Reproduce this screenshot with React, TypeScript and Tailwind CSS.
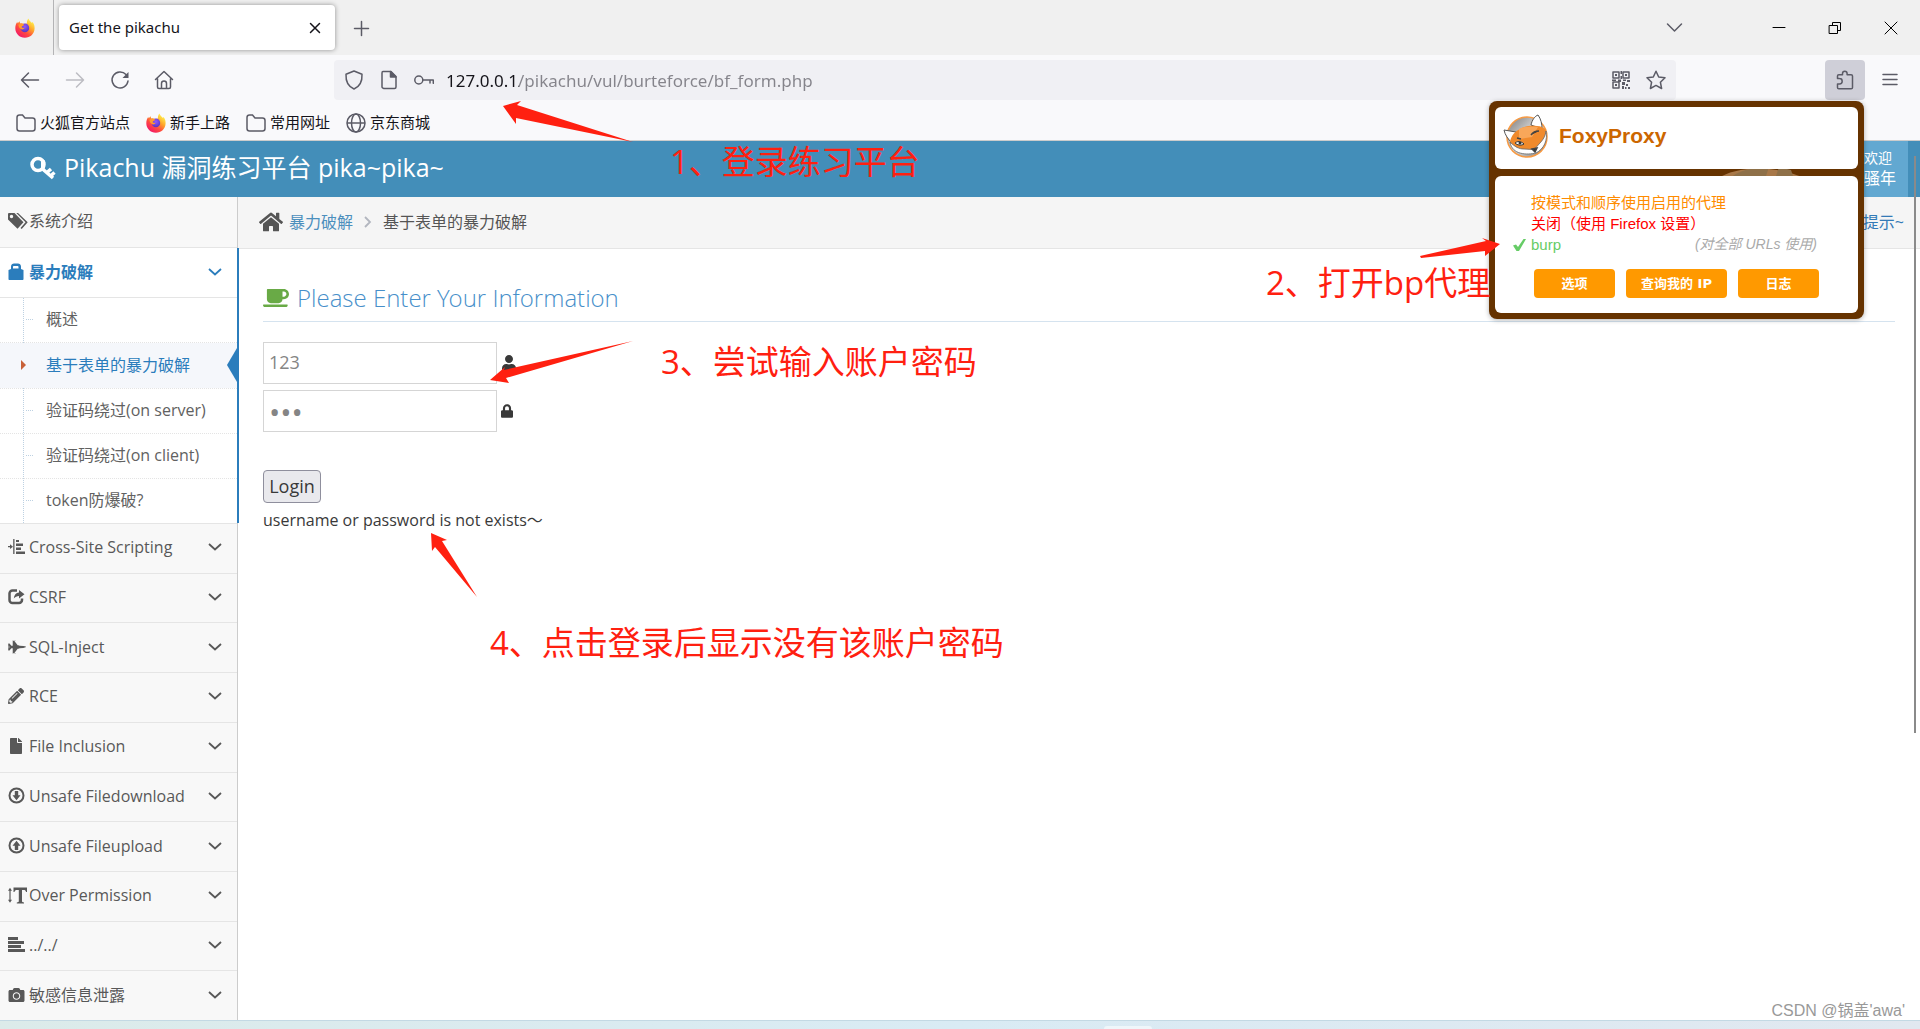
import type { ReactNode } from "react";
import {
  FaCamera,
  FaCoffee,
  FaFighterJet,
  FaFile,
  FaHome,
  FaLock,
  FaPencilAlt,
  FaUser,
} from "react-icons/fa";

type IconProps = { className?: string };

function FirefoxIcon({ className }: IconProps) {
  return (
    <svg viewBox="0 0 20 20" className={className} aria-hidden="true">
      <defs>
        <linearGradient id="ffBody" x1="0.85" y1="0.1" x2="0.2" y2="0.95">
          <stop offset="0" stopColor="#fff44f" />
          <stop offset="0.35" stopColor="#ffa52a" />
          <stop offset="0.65" stopColor="#ff4a3f" />
          <stop offset="1" stopColor="#f2156b" />
        </linearGradient>
        <radialGradient id="ffGlobe" cx="0.5" cy="0.35" r="0.6">
          <stop offset="0" stopColor="#9059ff" />
          <stop offset="1" stopColor="#5b37c4" />
        </radialGradient>
      </defs>
      <path
        fill="url(#ffBody)"
        d="M13.4 0.4c.6 2 2 2.900 3.200 4.300c.5-.1.900-.3 1-.8c1.500 1.900 2.100 4.200 2 6.600c-.2 5.300-4.400 9.300-9.700 9.300C4.500 19.800.3 15.600.3 10.300c0-2.500.7-4.800 2-6.600c0 .6.1 1.100.4 1.600c.6-.8 1.300-1.500 2.100-2c-.1.900.1 1.600.5 2.200c1.300-.3 2.600-.1 3.700.6c1-.6 2-.8 3-.7c-.3-1.800.1-3.500 1.400-5z"
      />
      <circle cx="9.900" cy="9.900" r="4.300" fill="url(#ffGlobe)" />
      <path fill="#ff9a2e" d="M3.500 6.800c1.700-1.300 4-1.400 5.600-.3c-.2 1.200-1.500 1.300-2.200 2c-.7.800.4 1.700 2.700 1.300c-.6 1.800-2.200 1.900-3.300 1.500c-1.700-.6-2.800-2.500-2.800-4.500z" />
    </svg>
  );
}

function FoxyLogo({ className }: IconProps) {
  return (
    <svg viewBox="0 0 46 44" className={className} aria-hidden="true">
      <defs>
        <linearGradient id="disc" x1="0" y1="0" x2="1" y2="1">
          <stop offset="0" stopColor="#777" />
          <stop offset="0.5" stopColor="#ddd" />
          <stop offset="1" stopColor="#777" />
        </linearGradient>
      </defs>
      <circle cx="24" cy="23" r="20" fill="url(#disc)" stroke="#f79a43" strokeWidth="1.500" />
      <path d="M1 16l12 2-4 11c-4-4-7-8-8-13z" fill="#fff" stroke="#555" />
      <path d="M28 11C29 6 32 2 35 1c3 4 4 9 4 14z" fill="#fff" stroke="#555" />
      <path d="M7 28c1-6 5-11 10-13c5-3 11-4 17-3c4 0 7 2 9 4c1 9-2 16-11 21c-4 2-7 1-9 0c-7-2-13-3-16-9z" fill="#f08a2c" />
      <path d="M16 15c6-3 13-3 19-2l-6 10-13 2z" fill="#f8a75a" />
      <path d="M7 28c5 5 9 7 14 7c4 0 8 1 11 0c4-6 10-9 11-18c2 9-2 18-10 22c-9 2-24 2-26-11z" fill="#fff" stroke="#666" strokeWidth="0.800" />
      <path d="M12 29c2-2 6-2 9 1c-3 2-7 1-9-1z" fill="#fff" stroke="#333" />
      <circle cx="17" cy="29" r="1.500" fill="#333" />
      <path d="M28 21c2-3 5-4 8-4M14 24l4 1M29 35l5-1-2 4z" stroke="#444" strokeWidth="1.500" fill="#333" />
    </svg>
  );
}

function TagsIcon() {
  return (
    <svg viewBox="0 0 20 16" className="h-4 w-5 shrink-0" fill="currentColor" aria-hidden="true">
      <path fillRule="evenodd" d="M0 1a1 1 0 0 1 1-1h5.500l9 9.200-6 6.600L0 6.500zM3.500 1.800a1.700 1.700 0 1 0 0 3.400a1.700 1.700 0 0 0 0-3.400z" />
      <path d="M8.300 0h1.700l9.700 9.200-6 6.800-1.200-1 5-5.800z" />
    </svg>
  );
}

function BagIcon() {
  return (
    <svg viewBox="0 0 16 17" className="h-[17px] w-4 shrink-0" fill="currentColor" aria-hidden="true">
      <path fillRule="evenodd" d="M3 6V3.500C3 1.500 4.500.5 6 .5h4c1.500 0 3 1 3 3V6l2.500 1v9c0 .6-.4 1-1 1h-13c-.6 0-1-.4-1-1V7zM6 3c-.6 0-1 .4-1 1v1.500h5.500V4c0-.6-.4-1-1-1z" />
    </svg>
  );
}

function IndentIcon() {
  return (
    <svg viewBox="0 0 17 16" className="h-4 w-[17px] shrink-0" fill="currentColor" aria-hidden="true">
      <path d="M5.200 0h1.300v15H5.200zM8 1h3v2H8zM8 4.500h7v2.500H8zM8 8.500h5V11H8zM8 12.500h9V15H8zM0 7h2V5.200L5 7.700 2 10V8.300H0z" />
    </svg>
  );
}

function ShareIcon() {
  return (
    <svg viewBox="0 0 17 16" className="h-4 w-[17px] shrink-0" aria-hidden="true">
      <path d="M9 1.500H4.500a3 3 0 0 0-3 3v6.500a3 3 0 0 0 3 3H11a3 3 0 0 0 3-3V9.500" fill="none" stroke="currentColor" strokeWidth="2.500" />
      <path d="M11 1l5.500 4.200L11 9.500V7C9 7 7 8 5.800 9.500C6 6 8 3.800 11 3.500z" fill="currentColor" />
    </svg>
  );
}

function CircleArrowIcon({ up }: { up?: boolean }) {
  return (
    <svg viewBox="0 0 17 17" className="h-[17px] w-[17px] shrink-0" aria-hidden="true">
      <circle cx="8.500" cy="8.500" r="7" fill="none" stroke="currentColor" strokeWidth="2" />
      {up ? (
        <path d="M8.500 3.800L12.500 8.800H10.200V13H6.800V8.800H4.500z" fill="currentColor" />
      ) : (
        <path d="M8.500 13.200L4.500 8.200H6.800V4h3.400v4.200h2.300z" fill="currentColor" />
      )}
    </svg>
  );
}

function TextHeightIcon() {
  return (
    <svg viewBox="0 0 19 17" className="h-[17px] w-[19px] shrink-0" fill="currentColor" aria-hidden="true">
      <path d="M5.500 0.500H19V5H18c-.2-1.400-1-2-2.200-2H14v11c0 1 .5 1.300 2 1.500v1H8.800v-1c1.400-.2 2-.5 2-1.500V3H9C7.500 3 6.800 3.600 6.500 5h-1zM2 .8l2 3H2.600v9H4l-2 3-2-3h1.400v-9H0z" />
    </svg>
  );
}

function AlignLeftIcon() {
  return (
    <svg viewBox="0 0 17 16" className="h-4 w-[17px] shrink-0" fill="currentColor" aria-hidden="true">
      <path d="M0 0h10v3H0zM0 4h16v3H0zM0 8h13v3H0zM0 12h17v3H0z" />
    </svg>
  );
}

function AngleDown() {
  return (
    <svg viewBox="0 0 14 8" className="h-2 w-[14px]" fill="none" stroke="currentColor" strokeWidth="1.800" aria-hidden="true">
      <path d="M1 1l6 5.500L13 1" />
    </svg>
  );
}

type ChromeButtonProps = { label: string; className?: string; children: ReactNode };

function ChromeButton({ label, className = "", children }: ChromeButtonProps) {
  return (
    <button type="button" aria-label={label} className={`flex h-10 w-10 shrink-0 items-center justify-center rounded ${className}`}>
      <svg viewBox="0 0 20 20" className="h-5 w-5" fill="none" stroke="currentColor" strokeWidth="1.500" strokeLinejoin="round" strokeLinecap="round">
        {children}
      </svg>
    </button>
  );
}

function TabBar() {
  return (
    <div className="flex h-[55px] shrink-0 items-center bg-[#f0f0f0] font-['Noto_Sans','Noto_Sans_CJK_SC',sans-serif]">
      <div className="flex h-full w-[54px] items-center border-r border-[#b4b4b6] pl-[15px]">
        <FirefoxIcon className="h-5 w-5" />
      </div>
      <div className="ml-[5px] flex h-[45px] w-[276px] items-center justify-between rounded bg-white pl-[10px] shadow-[0_0_5px_rgba(0,0,0,0.4)]">
        <span className="text-[15px] text-[#15141a]">Get the pikachu</span>
        <ChromeButton label="Close tab" className="text-[#15141a]">
          <path d="M5.500 5.500l9 9M14.500 5.500l-9 9" />
        </ChromeButton>
      </div>
      <ChromeButton label="New tab" className="ml-[6px] text-[#5b5b66]">
        <path d="M10.500 3.500v14M3.500 10.500h14" />
      </ChromeButton>
      <div className="ml-auto flex items-center text-black">
        <ChromeButton label="List all tabs" className="mr-[65px] text-[#5b5b66]">
          <path d="M3.500 6l7 7 7-7" />
        </ChromeButton>
        <ChromeButton label="Minimize" className="mr-4">
          <path d="M4 9.500h12" strokeWidth="1" />
        </ChromeButton>
        <ChromeButton label="Restore" className="mr-4">
          <path d="M4.500 7.500h8v8h-8zM7.500 7V4.500h8v8H13" strokeWidth="1" />
        </ChromeButton>
        <ChromeButton label="Close window" className="mr-[9px]">
          <path d="M4 4l12 12M16 4L4 16" strokeWidth="1" />
        </ChromeButton>
      </div>
    </div>
  );
}

function NavBar() {
  return (
    <div className="flex h-[50px] shrink-0 items-center bg-[#f9f9fb] text-[#5b5b66]">
      <ChromeButton label="Back" className="ml-[10px]">
        <path d="M1.500 10h17M8.500 3l-7 7 7 7" />
      </ChromeButton>
      <ChromeButton label="Forward" className="ml-[5px] text-[#bcbcc2]">
        <path d="M1.500 10h17M11.500 3l7 7-7 7" />
      </ChromeButton>
      <ChromeButton label="Reload" className="ml-[5px]">
        <path d="M18 11a8 8 0 1 1-2-6.500" />
        <path d="M18.500 2v6h-6z" fill="currentColor" stroke="none" />
      </ChromeButton>
      <ChromeButton label="Home" className="ml-1">
        <path d="M1.500 9.500L10 1.500l8.500 8M3.500 8.500V17c0 .8.700 1.500 1.500 1.500h10c.8 0 1.500-.7 1.500-1.500V8.500M7.500 18.500V13.500c0-1.500 1-2.500 2.500-2.500s2.500 1 2.500 2.500v5" />
      </ChromeButton>
      <div className="ml-[150px] flex h-10 flex-1 items-center rounded bg-[#f0f0f4] font-['Noto_Sans',sans-serif]">
        <ChromeButton label="Tracking protection">
          <path d="M10 1L18 4.300c.3 6-1.500 12-8 14.700C3.500 16.300 1.700 10.300 2 4.300z" />
        </ChromeButton>
        <ChromeButton label="Site information" className="-ml-[5px]">
          <path d="M4 1.500h8l5 5V17c0 .8-.7 1.500-1.500 1.500h-10C4.700 18.500 3 17.800 3 17V3c0-.8.500-1.500 1-1.500z" />
          <path d="M11.500 1.500v5.500H17z" fill="currentColor" />
        </ChromeButton>
        <ChromeButton label="Saved password" className="-ml-[5px]">
          <circle cx="4.800" cy="10" r="4" />
          <path d="M9 10h10.300v3.300M16 10v3" />
        </ChromeButton>
        <input
          type="text"
          aria-label="Address"
          defaultValue="127.0.0.1/pikachu/vul/burteforce/bf_form.php"
          className="ml-[2px] h-10 min-w-0 flex-1 bg-[linear-gradient(to_right,#15141a_73px,#85848b_73px)] bg-clip-text text-[17px] text-transparent outline-none"
        />
        <ChromeButton label="QR code">
          <path d="M2 2h6v6H2zM12 2h6v6h-6zM2 12h6v6H2z" />
          <path
            d="M4 4h2v2H4zM14 4h2v2h-2zM4 14h2v2H4zM9.500 1h1.500v3H9.500zM9.500 6h1.500v3H9.500zM1 9.500h4V11H1zM7 9.500h3V12H7zM12 9.500h3V11h-3zM16 10h3v2h-3zM11 12h3v3h-3zM15 14h2v2h-2zM11 16h2v3h-2zM17 17h2v2h-2zM14 17h1.500v2H14z"
            fill="currentColor"
            stroke="none"
          />
        </ChromeButton>
        <ChromeButton label="Bookmark this page" className="-ml-[5px]">
          <path d="M10 1.200l2.700 5.800 6.300.8-4.600 4.400 1.200 6.300L10 15.400l-5.600 3.100 1.200-6.300L1 7.800 7.300 7z" />
        </ChromeButton>
      </div>
      <ChromeButton label="Extensions" className="ml-[149px] bg-[#cfcfd8]">
        <path d="M2.500 8.500V6c0-.8.500-1.300 1.300-1.300H7.500V3.500a2.300 2.300 0 0 1 4.600 0v1.200h4c.8 0 1.400.5 1.400 1.300v11.500c0 .8-.6 1.300-1.400 1.300H3.800c-.8 0-1.300-.5-1.300-1.300V14h2a2.700 2.700 0 0 0 0-5.400z" />
      </ChromeButton>
      <ChromeButton label="Open application menu" className="ml-[5px] mr-[10px]">
        <path d="M3 4.500h14M3 9.500h14M3 14.500h14" />
      </ChromeButton>
    </div>
  );
}

function FolderIcon() {
  return (
    <svg viewBox="0 0 20 18" className="h-[18px] w-5" fill="none" stroke="#5b5b66" strokeWidth="1.500" aria-hidden="true">
      <path d="M1 3.500C1 2 2 1 3.500 1h3l2.500 3h7.500C18 4 19 5 19 6.500v8c0 1.500-1 2.500-2.500 2.500h-13C2 17 1 16 1 14.500z" />
    </svg>
  );
}

function GlobeIcon() {
  return (
    <svg viewBox="0 0 20 20" className="h-5 w-5" fill="none" stroke="#5b5b66" strokeWidth="1.500" aria-hidden="true">
      <circle cx="10" cy="10" r="9" />
      <ellipse cx="10" cy="10" rx="4.500" ry="9" />
      <path d="M1 10h18" />
    </svg>
  );
}

const bookmarks: { label: string; icon: ReactNode }[] = [
  { label: "火狐官方站点", icon: <FolderIcon /> },
  { label: "新手上路", icon: <FirefoxIcon className="h-5 w-5" /> },
  { label: "常用网址", icon: <FolderIcon /> },
  { label: "京东商城", icon: <GlobeIcon /> },
];

function BookmarksBar() {
  return (
    <nav className="flex h-9 shrink-0 items-center gap-4 border-b border-[#cccccc] bg-[#f9f9fb] pl-4">
      {bookmarks.map((item) => (
        <a key={item.label} href="#" className="flex items-center gap-1 text-[15px] text-[#15141a]">
          {item.icon}
          {item.label}
        </a>
      ))}
    </nav>
  );
}

function SiteHeader() {
  return (
    <header className="flex h-14 shrink-0 items-center bg-[#438eb9] pr-3 text-white">
      <a href="#" className="ml-[30px] flex items-center gap-2 pb-[2px] text-[26px]">
        <svg viewBox="0 0 26 24" className="h-6 w-[26px]" aria-hidden="true">
          <circle cx="8" cy="8.500" r="6" fill="none" stroke="currentColor" strokeWidth="3.500" />
          <path d="M12 12.500l11 9.500M17.500 16l3.500-3M21 19.500l3.500-3" fill="none" stroke="currentColor" strokeWidth="3.500" />
          <path d="M11 3l4 1.500v8L11 13" fill="currentColor" />
        </svg>
        <span className="text-[25px]">Pikachu 漏洞练习平台 pika~pika~</span>
      </a>
      <button type="button" className="ml-auto flex h-full w-24 flex-col justify-center bg-[#62a8d1] pb-[2px] pl-[52px] text-left">
        <span className="text-sm leading-5">欢迎</span>
        <span className="text-base leading-5">骚年</span>
      </button>
    </header>
  );
}

const subItems = ["概述", "基于表单的暴力破解", "验证码绕过(on server)", "验证码绕过(on client)", "token防爆破?"];

const menuItems: { label: string; icon: ReactNode }[] = [
  { label: "Cross-Site Scripting", icon: <IndentIcon /> },
  { label: "CSRF", icon: <ShareIcon /> },
  { label: "SQL-Inject", icon: <FaFighterJet className="h-4 w-[18px]" /> },
  { label: "RCE", icon: <FaPencilAlt className="h-4 w-4" /> },
  { label: "File Inclusion", icon: <FaFile className="h-4 w-4" /> },
  { label: "Unsafe Filedownload", icon: <CircleArrowIcon /> },
  { label: "Unsafe Fileupload", icon: <CircleArrowIcon up /> },
  { label: "Over Permission", icon: <TextHeightIcon /> },
  { label: "../../", icon: <AlignLeftIcon /> },
  { label: "敏感信息泄露", icon: <FaCamera className="h-4 w-[17px]" /> },
];

function Sidebar() {
  return (
    <aside className="flex w-[238px] shrink-0 flex-col border-r border-[#cccccc] bg-[#f8f8f8] text-base text-[#585858]">
      <a href="#" className="flex h-[51px] shrink-0 items-center border-b border-[#e5e5e5] pb-[2px] pl-2">
        <span className="flex w-[21px] items-center">
          <TagsIcon />
        </span>
        系统介绍
      </a>
      <div className="relative shrink-0 bg-white">
        <div className="absolute top-0 -right-[2px] bottom-0 w-[2px] bg-[#2b7dbc]" />
        <button type="button" className="flex h-[50px] w-full items-center border-b border-[#e5e5e5] pr-[15px] pb-[2px] pl-2 font-bold text-[#2b7dbc]">
          <span className="flex w-[21px] items-center">
            <BagIcon />
          </span>
          <span className="flex-1 text-left">暴力破解</span>
          <AngleDown />
        </button>
        <ul className="relative">
          <li aria-hidden="true" className="absolute top-0 bottom-0 left-[23px] border-l border-dotted border-[#bdd1e2]" />
          {subItems.map((label, i) => (
            <li key={label} className={i ? "border-t border-dotted border-[#e4e4e4]" : ""}>
              <a
                href="#"
                className={
                  i === 1
                    ? "relative flex h-[45px] items-center bg-[#f5f7fb] pb-[2px] pl-[46px] text-[#2b7dbc]"
                    : "relative flex h-[44px] items-center pb-[2px] pl-[46px] text-[#616161]"
                }
              >
                {i === 1 ? (
                  <>
                    <svg viewBox="0 0 6 10" className="absolute left-[20px] h-[10px] w-[6px] bg-[#f5f7fb]" aria-hidden="true">
                      <path d="M1 0l5 5-5 5z" fill="#c86139" />
                    </svg>
                    <svg viewBox="0 0 10 34" className="absolute right-0 h-[34px] w-[10px]" aria-hidden="true">
                      <path d="M10 0v34L0 17z" fill="#2b7dbc" />
                    </svg>
                  </>
                ) : (
                  <span className="absolute left-[26px] w-[7px] border-t border-dotted border-[#bdd1e2]" />
                )}
                {label}
              </a>
            </li>
          ))}
        </ul>
      </div>
      <div className="flex min-h-0 flex-1 flex-col">
        {menuItems.map((item) => (
          <button key={item.label} type="button" className="flex flex-1 items-center border-t border-[#e5e5e5] pr-[15px] pb-[2px] pl-2">
            <span className="flex w-[21px] items-center">{item.icon}</span>
            <span className="flex-1 text-left">{item.label}</span>
            <AngleDown />
          </button>
        ))}
      </div>
    </aside>
  );
}

function Breadcrumb() {
  return (
    <nav className="flex h-[52px] items-center border-b border-[#e5e5e5] bg-[#f5f5f5] pr-4 pb-[2px] pl-[21px] text-base text-[#555555]">
      <FaHome className="h-[22px] w-6" />
      <a href="#" className="ml-[6px] text-[#4c8fbd]">
        暴力破解
      </a>
      <svg viewBox="0 0 8 12" className="mx-[11px] h-3 w-2" fill="none" stroke="#b2b6bf" strokeWidth="1.800" aria-hidden="true">
        <path d="M1 1l5 5-5 5" />
      </svg>
      基于表单的暴力破解
      <a href="#" className="ml-auto text-[#337ab7]">
        提示~
      </a>
    </nav>
  );
}

function LoginForm() {
  return (
    <main className="pr-[25px] pl-[25px]">
      <h4 className="mt-[29px] flex h-[44px] items-center gap-2 border-b border-[#d5e3ef] pb-1 font-['Open_Sans_Light','Open_Sans',sans-serif] text-2xl font-light text-[#478fca]">
        <FaCoffee className="h-6 w-[26px] text-[#69aa46]" />
        Please Enter Your Information
      </h4>
      <form className="mt-5 text-[#393939]" onSubmit={(e) => e.preventDefault()}>
        <label className="flex items-center gap-1">
          <input
            type="text"
            aria-label="Username"
            defaultValue="123"
            className="h-[42px] w-[234px] border border-[#d5d5d5] bg-white px-[5px] pb-[2px] text-lg text-[#858585] outline-none"
          />
          <FaUser className="h-4 w-4" />
        </label>
        <label className="mt-[6px] flex items-center gap-1">
          <input
            type="password"
            aria-label="Password"
            defaultValue="123"
            className="h-[42px] w-[234px] border border-[#d5d5d5] bg-white px-[5px] text-3xl leading-none text-[#858585] outline-none"
          />
          <FaLock className="h-4 w-3" />
        </label>
        <button type="submit" className="mt-[38px] h-[33px] w-[58px] rounded border border-[#8f8f9d] bg-[#e9e9ed] pb-[2px] text-lg leading-none">
          Login
        </button>
      </form>
      <p className="mt-[5px] text-base text-[#393939]">username or password is not exists～</p>
    </main>
  );
}

function FoxyProxyPopup() {
  return (
    <section className="absolute top-[101px] right-14 flex w-[375px] flex-col gap-[7px] rounded-lg bg-[#663300] p-[6px] font-['Liberation_Sans','Noto_Sans_CJK_SC',sans-serif] shadow-[0_1px_5px_rgba(0,0,0,0.3)]">
      <svg viewBox="0 0 90 14" className="absolute top-[66px] left-[228px] h-[14px] w-[90px]" aria-hidden="true">
        <path d="M0 12C20-2 60-2 90 12z" fill="#a87848" />
        <path d="M12 12C20 4 35 0 52 0l-4 12zM62 0l12 3 3 9H58z" fill="#8e7048" />
      </svg>
      <h1 className="relative flex h-[62px] items-center gap-[10px] rounded-md bg-white pb-1 pl-2 text-[21px] font-bold text-[#cc6600]">
        <FoxyLogo className="h-[44px] w-[46px]" />
        FoxyProxy
      </h1>
      <div className="relative h-[137px] rounded-md bg-white pt-4">
        <ul className="text-[15px] leading-[21px]">
          <li className="pl-9 text-[#ff8c00]">按模式和顺序使用启用的代理</li>
          <li className="pl-9 text-[#ff0000]">关闭（使用 Firefox 设置）</li>
          <li className="flex items-center pr-[41px] pl-[18px] text-[#66cc66]">
            <svg viewBox="0 0 13 12" className="mr-[5px] h-3 w-[13px]" aria-hidden="true">
              <path d="M0 6.500l3-1L5 8 10.500 0H13L6 12H3.500z" fill="currentColor" />
            </svg>
            burp
            <span className="ml-auto text-sm leading-[21px] text-[#aaaaaa] italic">(对全部 URLs 使用)</span>
          </li>
        </ul>
        <div className="mt-[14px] flex gap-[11px] pl-[39px] font-['DejaVu_Sans','Noto_Sans_CJK_SC',sans-serif] text-[13px] font-bold text-white">
          <button type="button" className="h-[29px] w-[81px] rounded-sm bg-[#ff9900]">
            选项
          </button>
          <button type="button" className="h-[29px] w-[101px] rounded-sm bg-[#ff9900]">
            查询我的 IP
          </button>
          <button type="button" className="h-[29px] w-[81px] rounded-sm bg-[#ff9900]">
            日志
          </button>
        </div>
      </div>
    </section>
  );
}

// Red pen marks drawn on top of the whole window.
function Annotations() {
  return (
    <div className="pointer-events-none absolute inset-0 text-[33px] leading-10 whitespace-nowrap text-[#ff2010]">
      <svg className="absolute inset-0 h-full w-full" fill="#ff2010" aria-hidden="true">
        <path d="M503 106L521 101L517 105L633 142L516 118L516 124z" />
        <path d="M1420 256L1486 241L1482 238L1500 244L1485 256L1485 251L1421 258z" />
        <path d="M490 380L505 367L504 370L633 341L506 378L509 383z" />
        <path d="M431 533L447 540L442 541L477 597L435 547L432 551z" />
      </svg>
      <p className="absolute top-[142px] left-[670px]">1、登录练习平台</p>
      <p className="absolute top-[263px] left-[1266px]">2、打开bp代理</p>
      <p className="absolute top-[342px] left-[661px]">3、尝试输入账户密码</p>
      <p className="absolute top-[623px] left-[490px]">4、点击登录后显示没有该账户密码</p>
    </div>
  );
}

export default function App() {
  return (
    <div className="relative flex h-screen flex-col overflow-hidden bg-white font-['Open_Sans','Noto_Sans_CJK_SC',sans-serif]">
      <TabBar />
      <NavBar />
      <BookmarksBar />
      <SiteHeader />
      <div className="flex min-h-0 flex-1">
        <Sidebar />
        <div className="min-w-0 flex-1">
          <Breadcrumb />
          <LoginForm />
        </div>
      </div>
      <div className="flex h-[9px] shrink-0 items-end justify-center border-t border-[#c3d9e4] bg-linear-to-r from-[#dcebea] via-[#d9ebf4] to-[#e1e8f0] pl-[336px]">
        <div className="h-[3px] w-12 rounded-t bg-[#eff6fa]" />
      </div>
      <div className="absolute top-[156px] right-1 h-[577px] w-[2px] bg-[#8a8a8a]" />
      <FoxyProxyPopup />
      <Annotations />
      <p className="absolute right-[15px] bottom-2 font-['Liberation_Sans','Noto_Sans_CJK_SC',sans-serif] text-base leading-5 text-[#999999]">
        CSDN @锅盖'awa'
      </p>
    </div>
  );
}
